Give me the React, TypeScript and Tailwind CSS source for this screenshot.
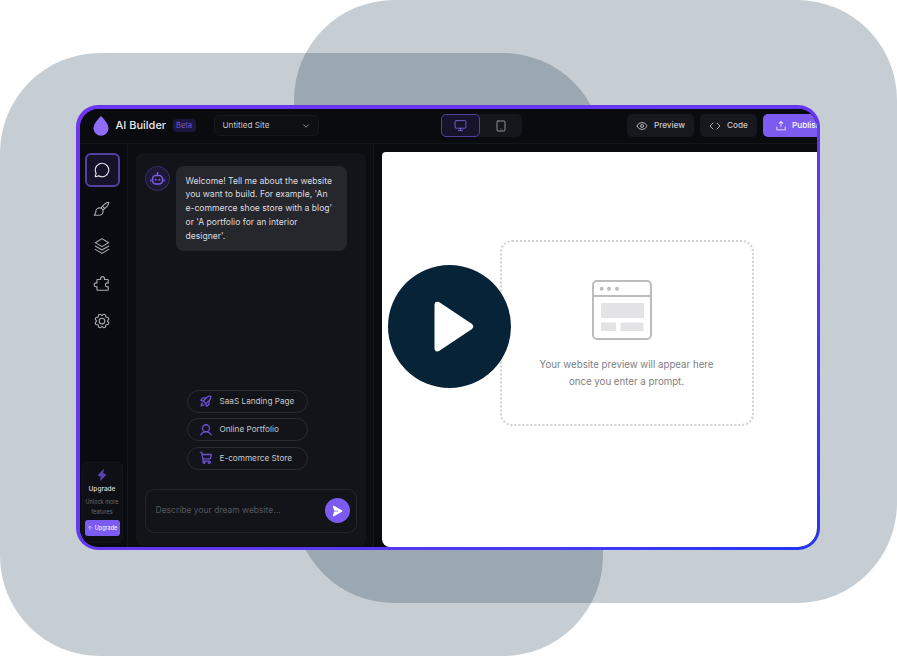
import { ArrowUp, ChevronDown, Code, Eye, Monitor, Tablet, type LucideIcon } from "lucide-react";
import { PiChatCircle, PiGear, PiLightningFill, PiPaintBrush, PiPaperPlaneRightFill, PiPuzzlePiece, PiRocketLaunchBold, PiShoppingCartBold, PiStack, PiUploadSimple, PiUserBold } from "react-icons/pi";
import type { IconType } from "react-icons";

const navItems: IconType[] = [PiPaintBrush, PiStack, PiPuzzlePiece, PiGear];

const suggestions: { icon: IconType; label: string }[] = [
  { icon: PiRocketLaunchBold, label: "SaaS Landing Page" },
  { icon: PiUserBold, label: "Online Portfolio" },
  { icon: PiShoppingCartBold, label: "E-commerce Store" },
];

function ToolButton({ icon: Icon, label, width }: { icon: LucideIcon; label: string; width: string }) {
  return (
    <div className={`flex h-[23px] shrink-0 items-center justify-center gap-[6px] rounded-[5px] bg-[#16181d] ${width}`}>
      <Icon className="h-[12px] w-[12px] text-[#c8c9ce]" strokeWidth={1.7} />
      <span className="text-[8.2px] font-medium text-[#c8c9ce]">{label}</span>
    </div>
  );
}

function Header() {
  return (
    <header className="flex h-[35px] shrink-0 items-center overflow-hidden border-b border-[#14161c] bg-[#090b0f] pl-[13px]">
      <svg width="16" height="20" viewBox="0 0 16 20" className="shrink-0">
        <path d="M8 0C8 0 .5 7 .5 12.200a7.500 7.500 0 0 0 15 0C15.500 7 8 0 8 0Z" fill="#8f6cf5" />
      </svg>
      <span className="ml-[7px] w-[50px] shrink-0 text-[11px] font-medium whitespace-nowrap text-[#e8e8ec]">AI Builder</span>
      <span className="ml-[7px] w-[23px] shrink-0 rounded-[4px] bg-[#1d1740] py-px text-center text-[7.5px] leading-[11px] text-[#7358d8]">Beta</span>
      <div className="ml-[18px] flex h-[21px] w-[105px] shrink-0 items-center justify-between rounded-[5px] border border-[#17191f] bg-[#0d0f13] pr-[7px] pl-[8px]">
        <span className="text-[8.2px] text-[#c4c5ca]">Untitled Site</span>
        <ChevronDown className="h-[10px] w-[10px] text-[#a5a6ac]" />
      </div>
      <div className="ml-[122.500px] flex h-[23px] w-[81px] shrink-0 rounded-[5px] bg-[#15171c]">
        <div className="flex w-[39px] items-center justify-center rounded-[5px] border border-[#55409f] bg-[#16132a]">
          <Monitor className="h-[13px] w-[13px] text-[#7c62d8]" strokeWidth={1.7} />
        </div>
        <div className="flex flex-1 items-center justify-center">
          <Tablet className="h-[12px] w-[12px] text-[#a5a6ac]" strokeWidth={1.7} />
        </div>
      </div>
      <div className="ml-[105px] flex shrink-0 gap-[6px]">
        <ToolButton icon={Eye} label="Preview" width="w-[67px]" />
        <ToolButton icon={Code} label="Code" width="w-[57px]" />
        <div className="flex h-[23px] w-[90px] shrink-0 items-center gap-[5px] rounded-[5px] bg-[#7c5cf0] pl-[12px]">
          <PiUploadSimple className="h-[12px] w-[12px] text-white" />
          <span className="text-[8.2px] font-medium text-white">Publish</span>
        </div>
      </div>
    </header>
  );
}

function Sidebar() {
  return (
    <aside className="flex w-[48px] shrink-0 flex-col items-center border-r border-[#14161c] bg-[#090b10] pt-[9px] pr-[2px] pb-[4px]">
      <div className="flex h-[34px] w-[35px] items-center justify-center rounded-[6px] border-2 border-[#54409f] bg-[#15122a]">
        <PiChatCircle className="h-[18px] w-[18px] text-[#e3e3e8]" />
      </div>
      <div className="mt-[13px] flex flex-col items-center gap-[19.500px]">
        {navItems.map((Icon, i) => (
          <Icon key={i} className="h-[18px] w-[18px] text-[#a9aaaf]" />
        ))}
      </div>
      <div className="mt-auto flex h-[81px] w-[41px] flex-col items-center rounded-[5px] border border-[#14161b] bg-[#0e1015] px-[3px] pt-[6px]">
        <PiLightningFill className="h-[12px] w-[12px] text-[#5a42b5]" />
        <span className="mt-[4px] text-[6.5px] font-medium text-[#dcdce0]">Upgrade</span>
        <span className="mt-[3px] text-center text-[5.500px] leading-[10px] text-[#6a6b72]">Unlock more features</span>
        <div className="mt-[3px] flex h-[16px] w-[35px] items-center justify-center gap-[2px] rounded-[3px] bg-[#7c5cf0]">
          <ArrowUp className="h-[6px] w-[6px] text-white" />
          <span className="text-[5.5px] text-white">Upgrade</span>
        </div>
      </div>
    </aside>
  );
}

function ChatPanel() {
  return (
    <section className="flex w-[246px] shrink-0 border-r border-[#14161c] bg-[#0b0d11] pt-[9.500px] pb-px pl-[8px]">
      <div className="flex w-[230px] flex-col rounded-[7px] bg-[#12141a] px-[9px] pt-[13px] pb-[13px]">
        <div className="flex items-start gap-[6px]">
          <div className="flex h-[25px] w-[25px] shrink-0 items-center justify-center rounded-full border border-[#3a3168] bg-[#1c1835]">
            <svg width="15" height="15" viewBox="0 0 15 15" fill="none" stroke="#7a5de0" strokeWidth="1.500">
              <path d="M7.500 1v3M.8 8.500v2M14.200 8.500v2" />
              <rect x="2.500" y="4.500" width="10" height="8.500" rx="3.500" />
              <circle cx="5.700" cy="8.700" r="1" fill="#7a5de0" stroke="none" />
              <circle cx="9.300" cy="8.700" r="1" fill="#7a5de0" stroke="none" />
            </svg>
          </div>
          <div className="w-[171px] rounded-[8px] bg-[#25272c] px-[10px] pt-[8.500px] pb-[7.500px] text-[8.600px] leading-[13.800px] text-[#dcdde0]">
            Welcome! Tell me about the website you want to build. For example, 'An e-commerce shoe store with a blog' or 'A portfolio for an interior designer'.
          </div>
        </div>
        <div className="mt-auto flex flex-col gap-[5.500px] pl-[42px]">
          {suggestions.map(({ icon: Icon, label }) => (
            <div key={label} className="flex h-[23px] w-[121px] items-center gap-[7px] rounded-full border border-[#2a2c32] pl-[11px]">
              <Icon className="h-[14px] w-[14px] text-[#6b4fd0]" />
              <span className="text-[8.2px] text-[#c6c7cb]">{label}</span>
            </div>
          ))}
        </div>
        <div className="mt-[19px] flex h-[44px] items-center justify-between rounded-[9px] border border-[#24262c] pr-[6px] pl-[10px]">
          <span className="text-[8.5px] text-[#55565d]">Describe your dream website...</span>
          <div className="flex h-[25px] w-[25px] items-center justify-center rounded-full bg-[#7c5cf0]">
            <PiPaperPlaneRightFill className="h-[12px] w-[12px] text-white" />
          </div>
        </div>
      </div>
    </section>
  );
}

function PreviewPane() {
  return (
    <div className="flex min-w-0 flex-1 bg-[#090b0f] pt-[8.500px] pl-[8px]">
      <main className="flex-1 rounded-tl-[4px] rounded-bl-[8px] bg-white pt-[87.500px] pl-[118px]">
        <div className="flex h-[186px] w-[254px] flex-col items-center rounded-[12px] border-2 border-dotted border-[#d2d2d4] pt-[38px]">
          <svg width="60" height="60" viewBox="0 0 60 60" fill="none" className="-ml-[10px]">
            <rect x="1" y="1" width="58" height="58" rx="4" stroke="#bcbcbf" strokeWidth="2" />
            <path d="M1 16h58" stroke="#bcbcbf" strokeWidth="2" />
            <circle cx="9.700" cy="8.700" r="2" fill="#bcbcbf" />
            <circle cx="17" cy="8.700" r="2" fill="#bcbcbf" />
            <circle cx="25" cy="8.700" r="2" fill="#bcbcbf" />
            <rect x="9" y="23" width="43" height="15" fill="#e3e3e5" />
            <rect x="9" y="42.500" width="15" height="8.500" fill="#e3e3e5" />
            <rect x="28.500" y="42.500" width="23" height="8.500" fill="#e3e3e5" />
          </svg>
          <p className="mt-[16px] text-center text-[9.7px] leading-[17px] text-[#808084]">
            Your website preview will appear here
            <br />
            once you enter a prompt.
          </p>
        </div>
      </main>
    </div>
  );
}

export default function App() {
  return (
    <div className="relative h-[656px] w-[897px] overflow-hidden bg-white font-['Inter',sans-serif]">
      <div className="absolute top-[53px] left-0 h-[603px] w-[603px] rounded-[100px] bg-[#0b2a40]/23" />
      <div className="absolute top-0 left-[294px] h-[603px] w-[603px] rounded-[100px] bg-[#0b2a40]/23" />

      <div className="absolute top-[105px] left-[76px] h-[445px] w-[744px] rounded-[22px] bg-gradient-to-br from-[#6d35f2] via-[#6238f0] via-60% to-[#1f35f8] p-[3.500px]">
        <div className="flex h-full w-full flex-col overflow-hidden rounded-[19px] bg-[#0b0d11]">
          <Header />
          <div className="flex min-h-0 flex-1">
            <Sidebar />
            <ChatPanel />
            <PreviewPane />
          </div>
        </div>
      </div>

      <div className="absolute top-[265px] left-[388px] flex h-[123px] w-[123px] items-center justify-center rounded-full bg-[#072337]">
        <svg width="40" height="51" viewBox="0 0 40 51" className="ml-[9px]">
          <path d="M5 1 L38 23 Q40.500 25.500 38 28 L5 50 Q.5 51.500 .5 47 V4 Q.5 -.5 5 1 Z" fill="#fff" />
        </svg>
      </div>
    </div>
  );
}
